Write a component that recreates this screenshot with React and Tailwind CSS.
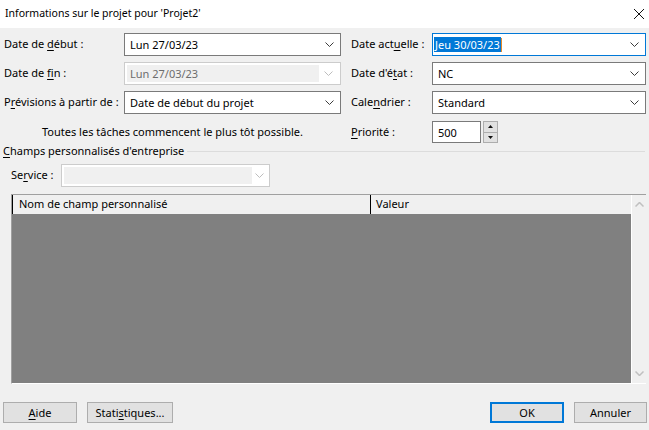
import React from "react";

const F = { fontFamily: '"Noto Sans", "Open Sans", sans-serif' };

function Chevron({ color = "#3c3c3c" }) {
  return (
    <svg width="9" height="5" viewBox="0 0 9 5" className="shrink-0">
      <path d="M0.5 0.5 L4.5 4.5 L8.5 0.5" fill="none" stroke={color} strokeWidth="1" />
    </svg>
  );
}

function U({ children }) {
  return <span className="underline underline-offset-2">{children}</span>;
}

function Combo({ w, children }) {
  return (
    <div className={`flex h-[23px] items-center bg-white border border-[#7a7a7a] pl-[5px] pr-[6px] ${w}`}>
      <div className="flex-1 text-black leading-none whitespace-nowrap">{children}</div>
      <Chevron />
    </div>
  );
}

function DisabledCombo({ w, children, innerW }) {
  return (
    <div className={`flex h-[23px] items-stretch bg-white border border-[#cccccc] p-[2px] ${w}`}>
      <div className={`flex items-center bg-[#f0f0f0] pl-[3px] text-[#6d6d6d] leading-none whitespace-nowrap ${innerW}`}>
        {children}
      </div>
      <div className="flex flex-1 items-center justify-center">
        <Chevron color="#bdbdbd" />
      </div>
    </div>
  );
}

export default function App() {
  return (
    <div className="w-[649px] h-[430px] bg-[#f0f0f0] flex flex-col text-black overflow-hidden whitespace-nowrap" style={F}>
      {/* Title bar */}
      <div className="h-[28px] bg-white flex items-center justify-between pl-[5px] pr-[4px] shrink-0">
        <span className="text-[10.5px]">Informations sur le projet pour 'Projet2'</span>
        <svg width="12" height="12" viewBox="0 0 12 12">
          <path d="M1 1 L11 11 M11 1 L1 11" stroke="#111" strokeWidth="1" />
        </svg>
      </div>

      <div className="flex flex-col pt-[5px] text-[11px]">
        {/* Row 1 */}
        <div className="flex items-center h-[23px]">
          <div className="w-[124px] pl-[4px]">Date de <U>d</U>ébut :</div>
          <Combo w="w-[217px]">Lun 27/03/23</Combo>
          <div className="w-[91px] pl-[10px]">Date act<U>u</U>elle :</div>
          <div className="flex h-[23px] w-[214px] items-center bg-white border border-[#0078d7] pl-[1px] pr-[6px]">
            <div className="flex-1 flex items-center leading-none">
              <span className="bg-[#0078d7] text-white px-[1px] py-[2px]">Jeu 30/03/23</span>
              <span className="w-[1px] h-[14px] bg-[#e38a2a]" />
            </div>
            <Chevron />
          </div>
        </div>
        {/* Row 2 */}
        <div className="flex items-center h-[23px] mt-[6px]">
          <div className="w-[124px] pl-[4px]">Date de <U>f</U>in :</div>
          <DisabledCombo w="w-[217px]" innerW="w-[192px]">Lun 27/03/23</DisabledCombo>
          <div className="w-[91px] pl-[10px]">Date d'é<U>t</U>at :</div>
          <Combo w="w-[214px]">NC</Combo>
        </div>
        {/* Row 3 */}
        <div className="flex items-center h-[23px] mt-[6px]">
          <div className="w-[124px] pl-[4px]">P<U>r</U>évisions à partir de :</div>
          <Combo w="w-[217px]">Date de début du projet</Combo>
          <div className="w-[91px] pl-[10px]">Cale<U>n</U>drier :</div>
          <Combo w="w-[214px]">Standard</Combo>
        </div>
        {/* Row 4 */}
        <div className="flex items-center h-[22px] mt-[7px]">
          <div className="w-[341px] pl-[42px]">Toutes les tâches commencent le plus tôt possible.</div>
          <div className="w-[91px] pl-[10px]"><U>P</U>riorité :</div>
          <div className="h-[22px] w-[49px] bg-white border border-[#7a7a7a] flex items-center pl-[5px] leading-none">500</div>
          <div className="ml-[2px] flex flex-col h-[22px] w-[15px] border border-[#adadad] bg-[#e1e1e1]">
            <div className="flex-1 flex items-center justify-center border-b border-[#adadad]">
              <svg width="5" height="3" viewBox="0 0 5 3"><path d="M0 3 L2.5 0 L5 3 Z" fill="#111" /></svg>
            </div>
            <div className="flex-1 flex items-center justify-center">
              <svg width="5" height="3" viewBox="0 0 5 3"><path d="M0 0 L2.5 3 L5 0 Z" fill="#111" /></svg>
            </div>
          </div>
        </div>

        {/* Group header */}
        <div className="flex items-center mt-[0px] h-[16px] pl-[3px] pr-[4px]">
          <span><U>C</U>hamps personnalisés d'entreprise</span>
          <div className="flex-1 h-[1px] bg-[#dcdcdc] ml-[3px] mt-[1px]" />
        </div>

        {/* Service */}
        <div className="flex items-center h-[23px] mt-[5px]">
          <div className="w-[61px] pl-[11px]">Se<U>r</U>vice :</div>
          <DisabledCombo w="w-[209px]" innerW="w-[188px]"></DisabledCombo>
        </div>

        {/* Table */}
        <div className="ml-[11px] mt-[7px] w-[635px] h-[190px] flex border-t border-l border-[#a0a0a0] border-b border-b-white">
          <div className="flex-1 flex flex-col">
            <div className="h-[19px] flex items-center bg-[#f0f0f0] shrink-0">
              <div className="w-[358px] h-full border-l border-black flex items-center pl-[6px]">Nom de champ personnalisé</div>
              <div className="h-full border-l border-black flex items-center pl-[5px]">Valeur</div>
            </div>
            <div className="flex-1 bg-[#808080]" />
          </div>
          <div className="w-[15px] border-l border-white bg-[#f0f0f0] flex flex-col justify-between items-center py-[7px]">
            <svg width="9" height="5" viewBox="0 0 9 5"><path d="M0.5 4.5 L4.5 0.5 L8.5 4.5" fill="none" stroke="#c0c0c0" strokeWidth="1.5" /></svg>
            <svg width="9" height="5" viewBox="0 0 9 5"><path d="M0.5 0.5 L4.5 4.5 L8.5 0.5" fill="none" stroke="#c0c0c0" strokeWidth="1.5" /></svg>
          </div>
        </div>

        {/* Buttons */}
        <div className="flex items-center mt-[18px] h-[21px] pl-[3px]">
          <div className="w-[74px] h-[21px] bg-[#e1e1e1] border border-[#adadad] flex items-center justify-center leading-none"><U>A</U>ide</div>
          <div className="ml-[10px] w-[86px] h-[21px] bg-[#e1e1e1] border border-[#adadad] flex items-center justify-center leading-none">Stati<U>s</U>tiques...</div>
          <div className="ml-[317px] w-[74px] h-[21px] bg-[#e1e1e1] border-2 border-[#0078d7] flex items-center justify-center leading-none">OK</div>
          <div className="ml-[10px] w-[73px] h-[21px] bg-[#e1e1e1] border border-[#adadad] flex items-center justify-center leading-none">Annuler</div>
        </div>
      </div>
    </div>
  );
}
